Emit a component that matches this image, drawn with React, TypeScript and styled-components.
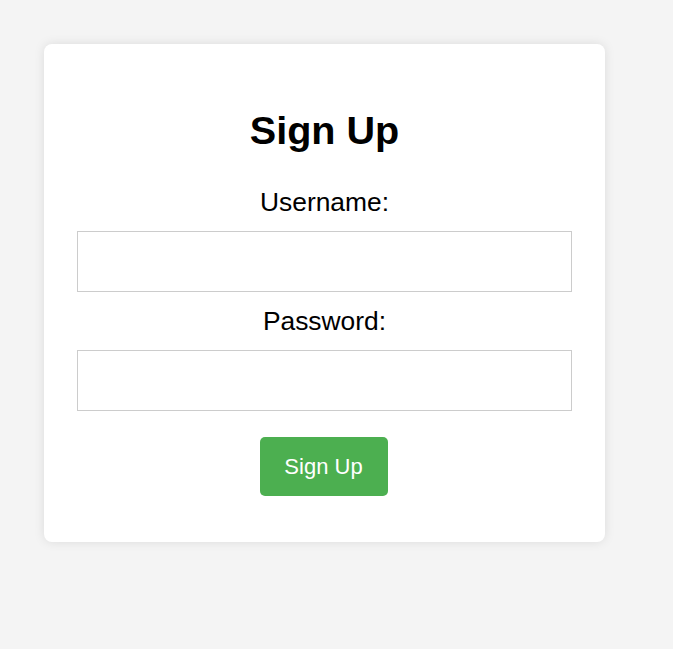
import React from "react";
import styled, { createGlobalStyle } from "styled-components";

const Global = createGlobalStyle`
  html, body { margin: 0; padding: 0; }
  body {
    background: #f4f4f4;
    font-family: "Liberation Sans", Arial, sans-serif;
    min-height: 649px;
  }
`;

const Page = styled.div`
  padding: 44px 0 0 44px;
`;

const Card = styled.form`
  width: 561px;
  box-sizing: border-box;
  background: #ffffff;
  border-radius: 8px;
  box-shadow: 0 0 11px rgba(0, 0, 0, 0.1);
  padding: 63px 33px 46px;
  display: flex;
  flex-direction: column;
  align-items: center;
`;

const Title = styled.h1`
  margin: 0 0 34px;
  font-size: 39.6px;
  line-height: 46px;
  font-weight: bold;
  color: #000;
`;

const Label = styled.label<{ $gapTop?: number }>`
  display: block;
  font-size: 26.4px;
  line-height: 30px;
  color: #000;
  margin-top: ${(p) => p.$gapTop ?? 0}px;
  margin-bottom: 14px;
`;

const Input = styled.input`
  width: 495px;
  height: 61px;
  box-sizing: border-box;
  border: 1px solid #cccccc;
  border-radius: 0;
  padding: 0 11px;
  font-size: 18px;
  font-family: inherit;
  outline: none;
`;

const Button = styled.button`
  margin-top: 26px;
  width: 128px;
  height: 59px;
  background: #4caf50;
  color: #ffffff;
  border: none;
  border-radius: 5px;
  font-family: "Liberation Sans", Arial, sans-serif;
  font-size: 22px;
  cursor: pointer;
  transform: translateX(-1px);
`;

export default function App() {
  return (
    <>
      <Global />
      <Page>
        <Card onSubmit={(e) => e.preventDefault()}>
          <Title>Sign Up</Title>
          <Label htmlFor="username">Username:</Label>
          <Input id="username" type="text" />
          <Label htmlFor="password" $gapTop={14}>
            Password:
          </Label>
          <Input id="password" type="password" />
          <Button type="submit">Sign Up</Button>
        </Card>
      </Page>
    </>
  );
}
